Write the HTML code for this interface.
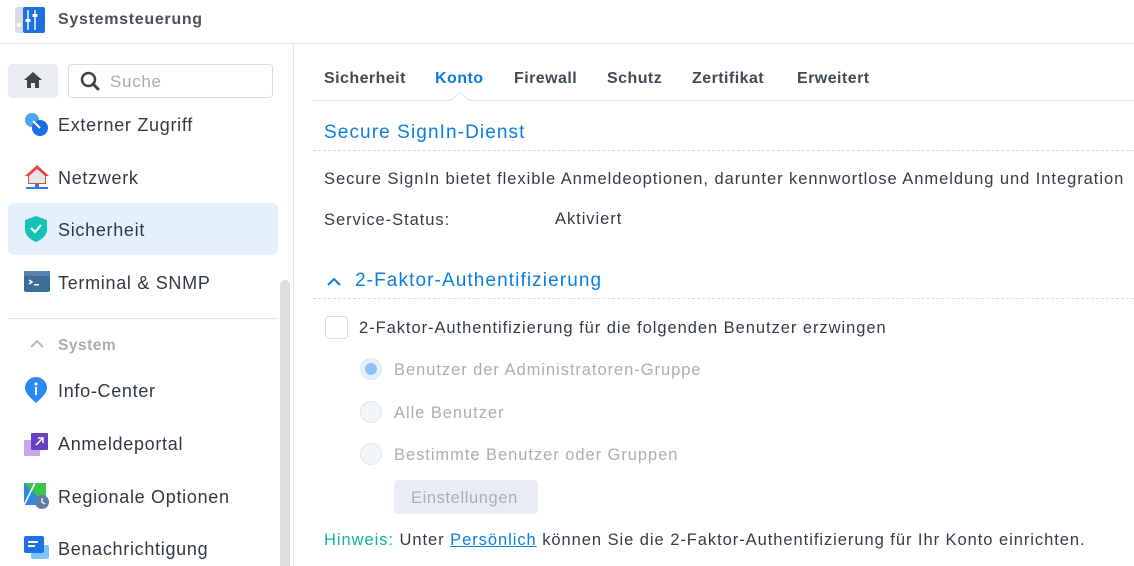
<!DOCTYPE html>
<html><head><meta charset="utf-8"><style>
*{margin:0;padding:0;box-sizing:border-box}
body{width:1134px;height:566px;overflow:hidden;background:#fff;font-family:"Liberation Sans",sans-serif;color:#333d48;position:relative}
.a{position:absolute;white-space:nowrap}
.side{font-size:18px;color:#2f3a45;letter-spacing:0.7px}
.tab{font-size:16px;font-weight:bold;color:#414b55;top:70px;letter-spacing:0.45px}
.t{font-size:16.5px;letter-spacing:0.95px}
.h{font-size:19px;color:#0a7fe0;letter-spacing:1.1px}
.g{color:#a9afb6}
.radio{position:absolute;width:22px;height:22px;border-radius:50%;border:1.5px solid #dfe5ec;background:#f3f6f9}
</style></head><body>
<svg class="a" style="left:15px;top:5px" width="30" height="28"><rect x="0" y="2" width="30" height="26" rx="3" fill="#d8dde3"/><rect x="8" y="2" width="22" height="26" rx="2" fill="#1d6fe0"/><rect x="12" y="5" width="2" height="20" fill="#bcd7ff"/><rect x="19" y="5" width="2" height="20" fill="#bcd7ff"/><rect x="10.5" y="14" width="5" height="3" fill="#fff"/><rect x="17.5" y="9" width="5" height="3" fill="#fff"/><circle cx="4" cy="20" r="2" fill="#fff"/></svg>
<div class="a" style="left:58px;top:11px;font-size:16px;font-weight:bold;color:#4a525b;letter-spacing:0.7px">Systemsteuerung</div>
<div class="a" style="left:0;top:43px;width:1134px;height:1px;background:#e3e7eb"></div>
<div class="a" style="left:293px;top:44px;width:1px;height:522px;background:#e3e7eb"></div>
<div class="a" style="left:8px;top:64px;width:50px;height:34px;background:#e9edf1;border-radius:4px"></div>
<svg class="a" style="left:23px;top:71px" width="20" height="18"><path d="M10 1 L19 9 H16 V17 H12 V12 H8 V17 H4 V9 H1 Z" fill="#3d444c"/></svg>
<div class="a" style="left:68px;top:64px;width:205px;height:34px;border:1px solid #d6dde5;border-radius:4px"></div>
<svg class="a" style="left:80px;top:71px" width="20" height="20"><circle cx="8.5" cy="8.5" r="6.5" stroke="#3d444c" stroke-width="2.5" fill="none"/><path d="M13 13 L18 18" stroke="#3d444c" stroke-width="3" stroke-linecap="round"/></svg>
<div class="a" style="left:110px;top:72px;font-size:17px;color:#a7adb4;letter-spacing:0.7px">Suche</div>

<svg class="a" style="left:24px;top:111px" width="26" height="26"><circle cx="8" cy="9" r="7" fill="#49a7f2"/><circle cx="16" cy="17" r="8" fill="#1b6de3"/><path d="M9 10 L16 17" stroke="#fff" stroke-width="2"/></svg>
<div class="a side" style="left:58px;top:115px">Externer Zugriff</div>
<svg class="a" style="left:24px;top:163px" width="26" height="28"><path d="M13 2 L25 13 H22 V21 H4 V13 H1 Z" fill="#e8453c"/><path d="M13 6 L21 13 V20 H5 V13 Z" fill="#e4e6e9"/><rect x="11" y="21" width="4" height="3" fill="#2f7be0"/><rect x="2" y="24" width="22" height="2" fill="#2f7be0"/></svg>
<div class="a side" style="left:58px;top:168px">Netzwerk</div>
<div class="a" style="left:8px;top:203px;width:270px;height:52px;background:#e4f0fc;border-radius:6px"></div>
<svg class="a" style="left:24px;top:215px" width="24" height="28"><path d="M12 1 L23 5 V14 C23 21 17 25 12 27 C7 25 1 21 1 14 V5 Z" fill="#15c3b6"/><path d="M7 13 L11 17 L17 10" stroke="#fff" stroke-width="2" fill="none"/></svg>
<div class="a side" style="left:58px;top:220px">Sicherheit</div>
<svg class="a" style="left:24px;top:271px" width="26" height="22"><rect x="0" y="0" width="26" height="21" rx="2" fill="#3c6c98"/><rect x="0" y="0" width="26" height="5" fill="#5683ad"/><path d="M5 9 L8 11 L5 13" stroke="#fff" stroke-width="1.5" fill="none"/><rect x="10" y="13" width="5" height="1.5" fill="#fff"/></svg>
<div class="a side" style="left:58px;top:273px">Terminal &amp; SNMP</div>
<div class="a" style="left:280px;top:280px;width:10px;height:286px;background:#dedede;border-radius:5px 5px 0 0"></div>
<div class="a" style="left:8px;top:318px;width:270px;height:1px;background:#e3e7eb"></div>
<svg class="a" style="left:29px;top:339px" width="16" height="10"><path d="M2 8 L8 2 L14 8" stroke="#b5bbc2" stroke-width="2" fill="none"/></svg>
<div class="a" style="left:58px;top:337px;font-size:15.5px;font-weight:bold;color:#a9afb6;letter-spacing:0.5px">System</div>
<svg class="a" style="left:24px;top:376px" width="24" height="28"><path d="M12 1 C18 1 23 6 23 12 C23 18 15 24 12 27 C9 24 1 18 1 12 C1 6 6 1 12 1Z" fill="#2a8af5"/><circle cx="12" cy="8" r="1.6" fill="#fff"/><rect x="11" y="11" width="2" height="8" fill="#fff"/></svg>
<div class="a side" style="left:58px;top:381px">Info-Center</div>
<svg class="a" style="left:24px;top:431px" width="24" height="26"><rect x="0" y="9" width="16" height="16" fill="#c9a7ee"/><rect x="7" y="2" width="17" height="17" rx="1" fill="#6a3fc2"/><path d="M12 14 L19 7 M14 7 H19 V12" stroke="#fff" stroke-width="1.5" fill="none"/></svg>
<div class="a side" style="left:58px;top:434px">Anmeldeportal</div>
<svg class="a" style="left:24px;top:483px" width="26" height="27"><rect x="0" y="0" width="22" height="22" fill="#2f88e8"/><path d="M0 0 L22 22 V0 Z" fill="#3ec34a"/><path d="M0 22 L11 0" stroke="#fff" stroke-width="1.5"/><circle cx="18" cy="19" r="7" fill="#5f7f9f"/><path d="M18 15 V19 L21 21" stroke="#fff" stroke-width="1.2" fill="none"/></svg>
<div class="a side" style="left:58px;top:487px">Regionale Optionen</div>
<svg class="a" style="left:24px;top:536px" width="26" height="24"><rect x="7" y="9" width="18" height="14" rx="2" fill="#7ec3fb"/><rect x="0" y="0" width="20" height="17" rx="2" fill="#1c73e8"/><rect x="4" y="5" width="10" height="2" fill="#fff"/><rect x="4" y="9" width="7" height="2" fill="#fff"/></svg>
<div class="a side" style="left:58px;top:539px">Benachrichtigung</div>

<div class="a tab" style="left:324px">Sicherheit</div>
<div class="a tab" style="left:435px;color:#0a7fe0">Konto</div>
<div class="a tab" style="left:514px">Firewall</div>
<div class="a tab" style="left:607px">Schutz</div>
<div class="a tab" style="left:692px">Zertifikat</div>
<div class="a tab" style="left:797px">Erweitert</div>
<div class="a" style="left:313px;top:100px;width:821px;height:1px;background:#dbe2ea"></div>
<svg class="a" style="left:450px;top:92px" width="20" height="10"><path d="M0 9 L10 0 L20 9" fill="#fff" stroke="#dbe2ea"/><rect x="0" y="9" width="20" height="2" fill="#fff"/></svg>

<div class="a h" style="left:324px;top:122px">Secure SignIn-Dienst</div>
<div class="a" style="left:313px;top:150px;width:821px;border-top:1px dashed #d6dde5"></div>
<div class="a t" style="left:324px;top:170px">Secure SignIn bietet flexible Anmeldeoptionen, darunter kennwortlose Anmeldung und Integration</div>
<div class="a t" style="left:324px;top:211px">Service-Status:</div>
<div class="a t" style="left:555px;top:210px">Aktiviert</div>

<svg class="a" style="left:326px;top:277px" width="16" height="10"><path d="M2 8 L8 2 L14 8" stroke="#0a7fe0" stroke-width="2" fill="none"/></svg>
<div class="a h" style="left:355px;top:270px">2-Faktor-Authentifizierung</div>
<div class="a" style="left:313px;top:298px;width:821px;border-top:1px dashed #d6dde5"></div>

<div class="a" style="left:325px;top:316px;width:23px;height:23px;border:1.5px solid #d6dde5;border-radius:4px"></div>
<div class="a t" style="left:359px;top:319px">2-Faktor-Authentifizierung für die folgenden Benutzer erzwingen</div>
<div class="radio" style="left:360px;top:358px;background:#e4f0fc"></div>
<div class="a" style="left:365px;top:363px;width:12px;height:12px;border-radius:50%;background:#8cc4f7"></div>
<div class="a t g" style="left:394px;top:361px">Benutzer der Administratoren-Gruppe</div>
<div class="radio" style="left:360px;top:401px"></div>
<div class="a t g" style="left:394px;top:404px">Alle Benutzer</div>
<div class="radio" style="left:360px;top:443px"></div>
<div class="a t g" style="left:394px;top:446px">Bestimmte Benutzer oder Gruppen</div>
<div class="a" style="left:394px;top:480px;width:144px;height:34px;background:#e9edf3;border-radius:4px"></div>
<div class="a t g" style="left:411px;top:489px;letter-spacing:0.6px">Einstellungen</div>
<div class="a t" style="left:324px;top:531px"><span style="color:#12b0a5">Hinweis:</span> Unter <span style="color:#0a7fe0;text-decoration:underline">Persönlich</span> können Sie die 2-Faktor-Authentifizierung für Ihr Konto einrichten.</div>
</body></html>
